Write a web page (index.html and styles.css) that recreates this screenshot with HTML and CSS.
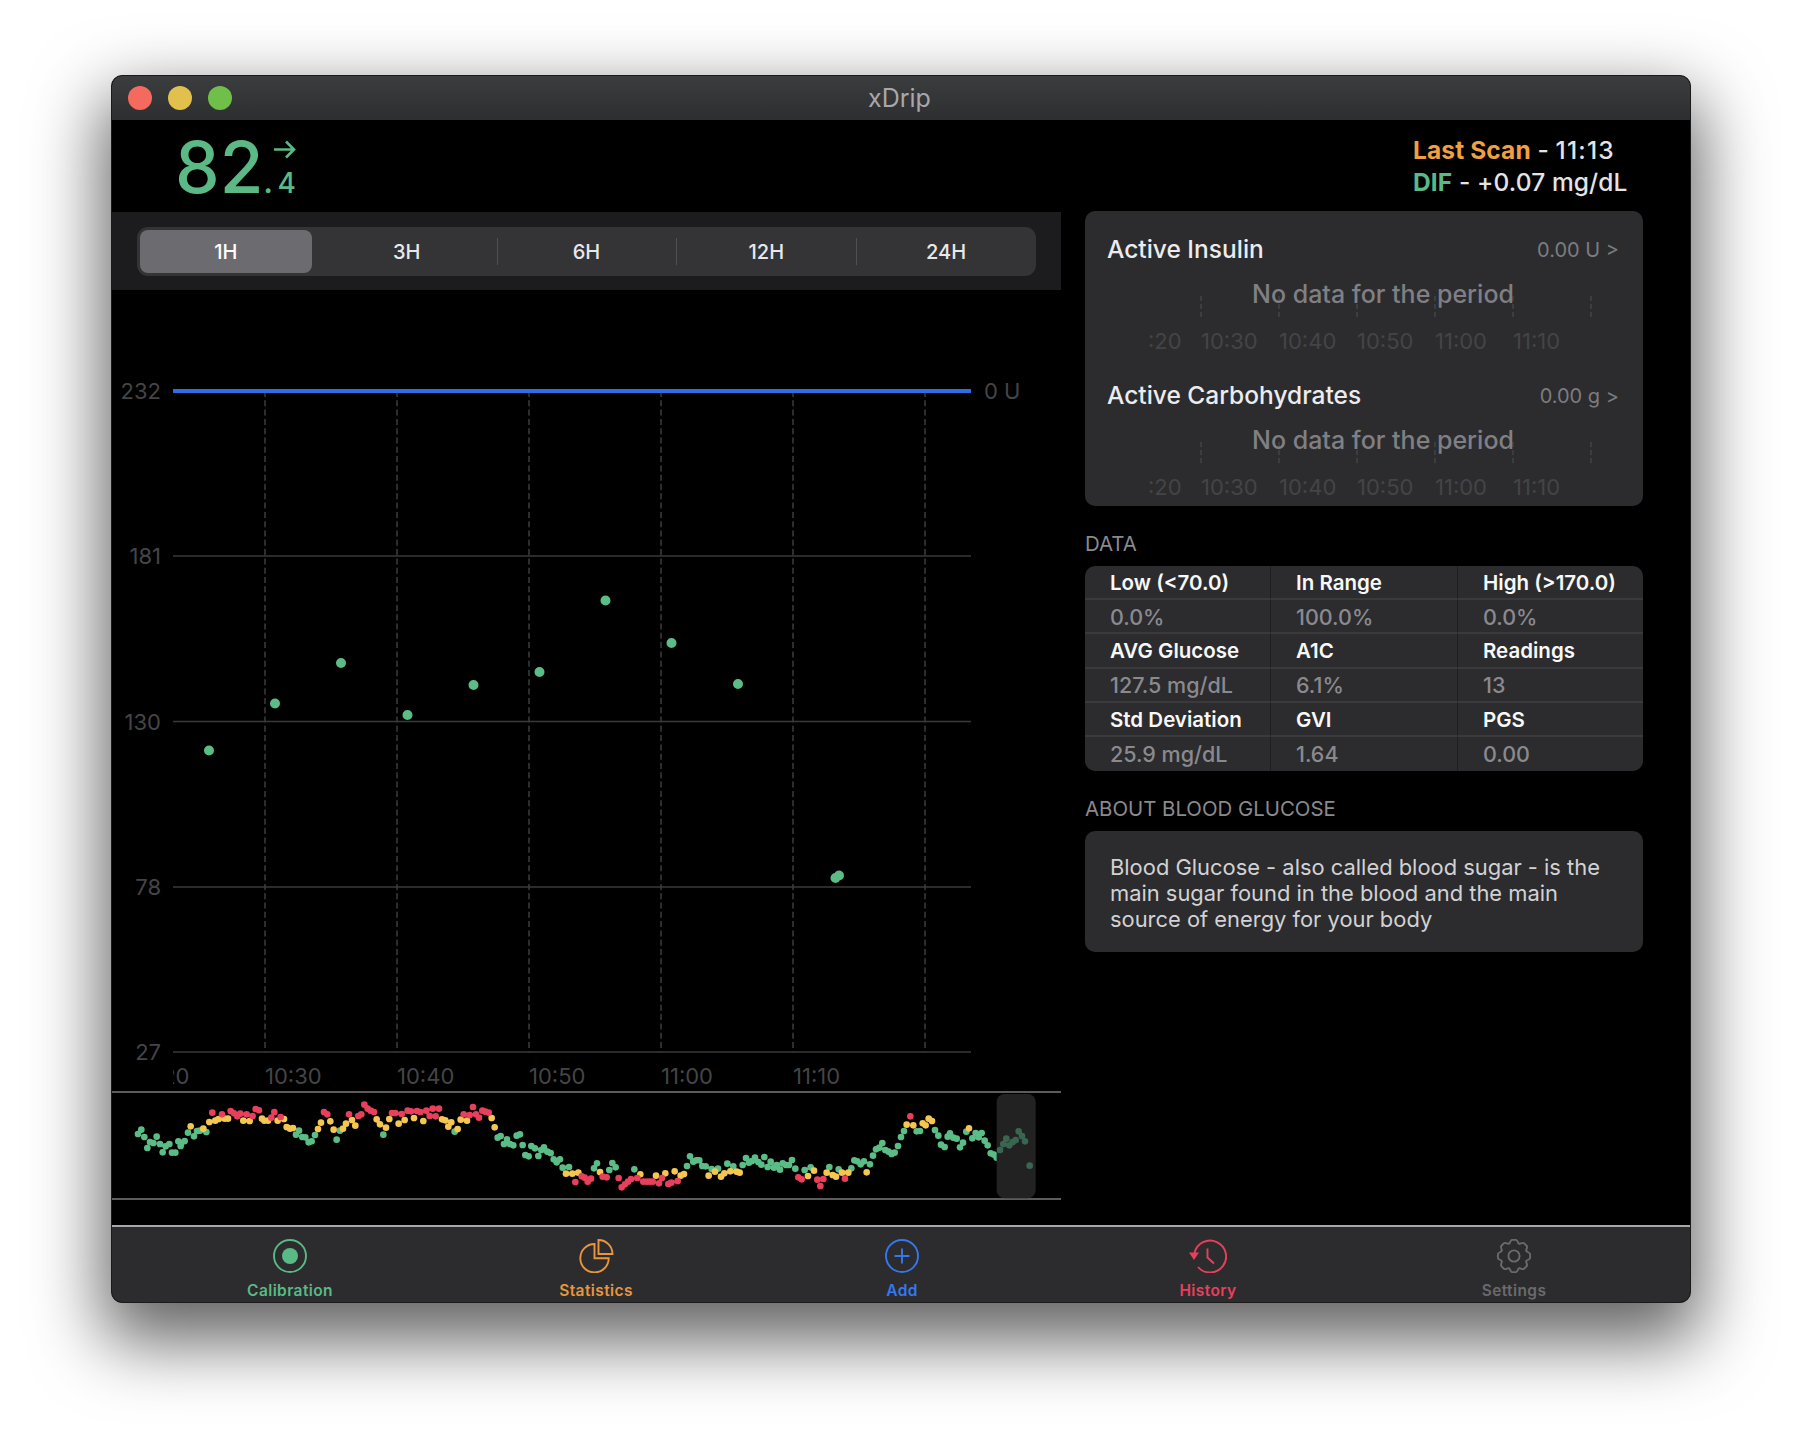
FILE: index.html
```html
<!DOCTYPE html>
<html lang="en">
<head>
<meta charset="utf-8">
<title>xDrip</title>
<link rel="stylesheet" href="styles.css">
</head>
<body>
<div class="window">
  <header class="titlebar">
    <div class="lights"><span class="light red"></span><span class="light yellow"></span><span class="light green"></span></div>
    <div class="title">xDrip</div>
  </header>
  <section class="topbar">
    <div class="reading">
      <span class="big">82</span><span class="dot">.</span>
      <div class="trend">
        <svg class="arrow" width="23" height="19" viewBox="0 0 23 19"><path d="M1 9.5H21M13 1.5L21 9.5L13 17.5"/></svg>
        <span class="small">4</span>
      </div>
    </div>
    <div class="scan">
      <div><span class="orange">Last Scan</span> - <span class="time">11:13</span></div>
      <div><span class="greentext">DIF</span> - +0.07 mg/dL</div>
    </div>
  </section>
  <div class="content">
    <div class="left">
      <div class="band">
        <div class="segments">
          <div class="seg active">1H</div>
          <div class="seg">3H</div>
          <div class="seg sep">6H</div>
          <div class="seg sep">12H</div>
          <div class="seg sep">24H</div>
        </div>
      </div>
      <svg class="chart" width="950" height="935" viewBox="112 290 950 935">
        <defs><clipPath id="plotclip"><rect x="173" y="1055" width="800" height="36"/></clipPath></defs>
        <g class="hgrid">
          <path d="M173 556H971M173 721.5H971M173 887H971M173 1052H971"/>
        </g>
        <g class="vgrid">
          <path d="M265 391V1052M397 391V1052M529 391V1052M661 391V1052M793 391V1052M925 391V1052"/>
        </g>
        <path class="blueline" d="M173 391H971"/>
        <g class="axis">
          <text x="161" y="399" text-anchor="end">232</text>
          <text x="161" y="564" text-anchor="end">181</text>
          <text x="161" y="730" text-anchor="end">130</text>
          <text x="161" y="895" text-anchor="end">78</text>
          <text x="161" y="1060" text-anchor="end">27</text>
          <text x="984" y="399">0 U</text>
          <g clip-path="url(#plotclip)">
            <text x="133" y="1084">10:20</text>
            <text x="265" y="1084">10:30</text>
            <text x="397" y="1084">10:40</text>
            <text x="529" y="1084">10:50</text>
            <text x="661" y="1084">11:00</text>
            <text x="793" y="1084">11:10</text>
          </g>
        </g>
        <path class="points" d="M209 750.5h0M275 703.5h0M341 663h0M407.5 715h0M473.5 685h0M539.5 672h0M605.5 600.5h0M671.5 643h0M738 684h0M835.5 878h0M839 875.5h0"/>
        <rect class="line-rect" x="112" y="1091" width="949" height="2"/>
        <rect class="line-rect" x="112" y="1198" width="949" height="2"/>
        <g transform="translate(110 1070) scale(.33333)">
          <path class="m g" d="M84 192h0M94 179h0M103 201h0M112 234h0M120 216h0M130 219h0M140 200h0M150 222h0M158 247h0M167 229h0M178 222h0M186 248h0M196 248h0M205 214h0M214 220h0M212 228h0M224 213h0M234 188h0M252 199h0M261 183h0M270 182h0M289 186h0M558 194h0M567 182h0M577 201h0M586 202h0M596 217h0M605 214h0M615 195h0M680 209h0M690 182h0M820 194h0M1034 185h0M1163 203h0M1172 198h0M1182 222h0M1191 208h0M1200 222h0M1210 226h0M1220 197h0M1230 193h0M1238 225h0M1246 255h0M1256 259h0M1264 228h0M1275 235h0M1285 258h0M1294 240h0M1302 232h0M1312 245h0M1322 249h0M1331 268h0M1340 277h0M1350 268h0M1358 293h0M1377 291h0"/>
          <path class="m y" d="M242 169h0M280 176h0M298 156h0M316 152h0M326 147h0M344 146h0M354 146h0M400 152h0M419 153h0M456 146h0M463 152h0M474 152h0M503 152h0M522 147h0M530 171h0M540 176h0M549 174h0M624 177h0M633 158h0M661 154h0M671 179h0M699 176h0M708 161h0M726 150h0M736 167h0M800 148h0M810 163h0M828 173h0M838 147h0M866 161h0M884 150h0M912 144h0M940 153h0M996 148h0M1006 151h0M1015 170h0M1024 157h0M1043 177h0M1052 149h0M1071 152h0M1145 144h0M1154 172h0M1368 311h0M1387 311h0M1405 308h0"/>
          <path class="m r" d="M307 128h0M336 133h0M362 123h0M372 130h0M382 139h0M391 131h0M410 133h0M428 138h0M437 117h0M447 121h0M484 143h0M493 126h0M512 141h0M642 126h0M652 133h0M717 133h0M745 138h0M754 133h0M763 104h0M773 116h0M782 122h0M792 126h0M846 129h0M856 129h0M875 132h0M893 122h0M903 124h0M921 123h0M931 126h0M949 122h0M959 138h0M968 116h0M977 139h0M987 116h0M1061 133h0M1079 135h0M1089 111h0M1098 133h0M1107 143h0M1117 122h0M1126 125h0M1136 128h0M1396 336h0M1415 319h0M1424 323h0M1433 335h0"/>
        </g>
        <g transform="translate(590 1070) scale(.33333)">
          <path class="m g" d="M12 295h0M21 280h0M58 300h0M67 279h0M77 292h0M133 298h0M291 288h0M300 259h0M310 275h0M319 271h0M328 271h0M337 288h0M347 289h0M365 297h0M384 296h0M412 281h0M430 289h0M458 285h0M468 264h0M477 278h0M495 263h0M486 273h0M505 276h0M514 284h0M523 261h0M533 291h0M542 275h0M552 293h0M560 285h0M570 299h0M578 280h0M588 285h0M597 285h0M606 270h0M616 296h0M644 300h0M662 292h0M718 291h0M746 298h0M784 295h0M793 271h0M802 274h0M812 283h0M822 274h0M840 283h0M849 257h0M858 238h0M868 233h0M877 219h0M886 240h0M896 245h0M905 252h0M914 248h0M924 228h0M933 201h0M942 183h0M980 184h0M990 183h0M1035 180h0M1045 197h0M1053 224h0M1064 231h0M1073 200h0M1080 190h0M1090 203h0M1100 206h0M1110 232h0M1119 218h0M1129 185h0M1147 205h0M1157 189h0M1166 202h0M1175 189h0M1184 212h0M1193 226h0M1202 250h0M1212 254h0M1220 263h0"/>
          <path class="m y" d="M30 306h0M151 313h0M198 317h0M226 310h0M254 304h0M272 317h0M282 312h0M356 317h0M375 305h0M393 320h0M403 310h0M421 304h0M440 305h0M449 308h0M654 318h0M672 302h0M710 308h0M728 315h0M738 320h0M756 308h0M775 308h0M830 307h0M950 164h0M970 166h0M998 160h0M1007 166h0M1016 146h0M1026 153h0M1137 175h0"/>
          <path class="m r" d="M3 326h0M38 320h0M50 322h0M86 324h0M95 352h0M105 343h0M114 335h0M123 327h0M142 324h0M160 335h0M170 335h0M179 335h0M188 335h0M207 340h0M216 324h0M235 342h0M244 338h0M263 333h0M625 322h0M635 328h0M682 329h0M691 348h0M700 327h0M765 326h0M961 139h0"/>
          <rect class="brush" x="1220" y="72" width="117" height="313" rx="24"/>
          <path class="m d" d="M1230 240h0M1240 222h0M1249 206h0M1258 226h0M1268 216h0M1277 210h0M1286 184h0M1296 198h0M1305 214h0M1319 287h0"/>
        </g>
      </svg>
    </div>
    <aside class="right">
      <div class="card active-card">
        <div class="block">
          <div class="block-head"><span class="block-title">Active Insulin</span><span class="block-val">0.00 U &gt;</span></div>
          <svg class="mini" width="557" height="90" viewBox="0 0 557 90">
            <path class="mini-v" d="M116 23V44M194 23V44M272 23V44M350 23V44M428 23V44M506 23V44"/>
            <text class="nodata" x="167" y="30">No data for the period</text>
            <g class="mini-t"><text x="63" y="76">:20</text><text x="116" y="76">10:30</text><text x="194" y="76">10:40</text><text x="272" y="76">10:50</text><text x="350" y="76">11:00</text><text x="428" y="76">11:10</text></g>
          </svg>
        </div>
        <div class="block">
          <div class="block-head"><span class="block-title">Active Carbohydrates</span><span class="block-val">0.00 g &gt;</span></div>
          <svg class="mini" width="557" height="90" viewBox="0 0 557 90">
            <path class="mini-v" d="M116 23V44M194 23V44M272 23V44M350 23V44M428 23V44M506 23V44"/>
            <text class="nodata" x="167" y="30">No data for the period</text>
            <g class="mini-t"><text x="63" y="76">:20</text><text x="116" y="76">10:30</text><text x="194" y="76">10:40</text><text x="272" y="76">10:50</text><text x="350" y="76">11:00</text><text x="428" y="76">11:10</text></g>
          </svg>
        </div>
      </div>
      <h2 class="sec sec-data">DATA</h2>
      <div class="card table">
        <div class="c h">Low (&lt;70.0)</div><div class="c h">In Range</div><div class="c h">High (&gt;170.0)</div>
        <div class="c v">0.0%</div><div class="c v">100.0%</div><div class="c v">0.0%</div>
        <div class="c h">AVG Glucose</div><div class="c h">A1C</div><div class="c h">Readings</div>
        <div class="c v">127.5 mg/dL</div><div class="c v">6.1%</div><div class="c v">13</div>
        <div class="c h">Std Deviation</div><div class="c h">GVI</div><div class="c h">PGS</div>
        <div class="c v">25.9 mg/dL</div><div class="c v">1.64</div><div class="c v">0.00</div>
      </div>
      <h2 class="sec sec-about">ABOUT BLOOD GLUCOSE</h2>
      <div class="card about">Blood Glucose - also called blood sugar - is the main sugar found in the blood and the main source of energy for your body</div>
    </aside>
  </div>
  <nav class="tabs">
    <div class="tab t-green">
      <svg width="38" height="34" viewBox="0 0 38 34"><circle cx="19" cy="17" r="16"/><circle class="fill" cx="19" cy="17" r="8"/></svg>
      <span>Calibration</span>
    </div>
    <div class="tab t-orange">
      <svg width="38" height="34" viewBox="0 0 38 34"><path d="M17.5 5A14.2 14.2 0 1 0 31.7 19.2H17.5Z"/><path d="M21.5 1V15H35.5A14 14 0 0 0 21.5 1Z"/></svg>
      <span>Statistics</span>
    </div>
    <div class="tab t-blue">
      <svg width="38" height="34" viewBox="0 0 38 34"><circle cx="19" cy="17" r="16"/><path d="M19 9.5V24.5M11.5 17H26.5"/></svg>
      <span>Add</span>
    </div>
    <div class="tab t-red">
      <svg width="38" height="34" viewBox="0 0 38 34"><path d="M5.5 14A16 16 0 1 1 9 28"/><path class="fill" d="M0 13.5H10L5 21Z"/><path d="M18.5 9.5V18.5L25 24.5"/></svg>
      <span>History</span>
    </div>
    <div class="tab t-gray">
      <svg width="38" height="34" viewBox="0 0 38 34">
        <defs><path id="tooth" d="M14.03 4.99C15 4 15.5 .9 17 .9H21C22.5 .9 23 4 23.97 4.99"/></defs>
        <g>
          <use href="#tooth"/><use href="#tooth" transform="rotate(45 19 17)"/><use href="#tooth" transform="rotate(90 19 17)"/><use href="#tooth" transform="rotate(135 19 17)"/><use href="#tooth" transform="rotate(180 19 17)"/><use href="#tooth" transform="rotate(225 19 17)"/><use href="#tooth" transform="rotate(270 19 17)"/><use href="#tooth" transform="rotate(315 19 17)"/>
        </g>
        <circle cx="19" cy="17" r="5.6"/>
      </svg>
      <span>Settings</span>
    </div>
  </nav>
</div>
</body>
</html>
```
FILE: styles.css
```css
* { box-sizing: border-box; }
html, body { margin: 0; height: 100%; }
body {
  width: 1802px;
  height: 1450px;
  background: #fff;
  padding: 75px 111px 0;
  font-family: Inter, "Liberation Sans", sans-serif;
  overflow: hidden;
}
.window {
  width: 1580px;
  height: 1228px;
  background: #000;
  border-radius: 11px;
  border: 1px solid #1a1a1a;
  overflow: hidden;
  display: flex;
  flex-direction: column;
  box-shadow: 0 30px 70px 8px rgba(0,0,0,.62);
}
.titlebar {
  height: 44px;
  flex: none;
  position: relative;
  background: linear-gradient(#3c3d3f, #2d2e30);
  display: flex;
  align-items: center;
  justify-content: center;
}
.lights { position: absolute; left: 16px; top: 10px; display: flex; gap: 16px; }
.light { width: 24px; height: 24px; border-radius: 50%; }
.light.red { background: #f46a5e; }
.light.yellow { background: #e2c04d; }
.light.green { background: #6fbf49; }
.title { font-size: 25px; color: #a8a8aa; margin-left: -3px; }
.topbar {
  height: 92px;
  flex: none;
  display: flex;
  justify-content: space-between;
  color: #5ab984;
}
.reading { display: flex; align-items: flex-start; padding: 4px 0 0 63px; }
.big { font-size: 71px; line-height: 86px; font-weight: 500; }
.dot { font-size: 28px; line-height: 28px; margin: 45px 0 0 0; font-weight: 700; }
.trend { display: flex; flex-direction: column; padding-top: 16px; }
.arrow { fill: none; stroke: #5ab984; stroke-width: 2.6; }
.small { font-size: 28px; line-height: 32px; margin-top: 8px; text-align: right; font-weight: 500; }
.scan { color: #e4e4e6; font-size: 24.5px; line-height: 32px; padding: 14px 0 0; width: 277px; font-weight: 500; letter-spacing: .12px; }
.time { letter-spacing: 1.2px; }
.orange { color: #f0a040; font-weight: 700; }
.greentext { color: #5ab984; font-weight: 700; }
.content { flex: 1; display: flex; min-height: 0; }
.left { width: 949px; flex: none; display: flex; flex-direction: column; }
.band { height: 78px; flex: none; background: #1c1c1e; padding: 15px 25px; }
.segments {
  height: 49px;
  background: #343437;
  border-radius: 11px;
  display: grid;
  grid-template-columns: repeat(5, 1fr);
  width: 899px;
}
.seg {
  font-size: 20px;
  font-weight: 500;
  color: #e8e8ea;
  display: flex;
  align-items: center;
  justify-content: center;
  position: relative;
}
.seg.active { background: #6c6c70; border-radius: 8px; color: #fff; margin: 3px 5px 3px 3px; }
.seg.sep::before {
  content: "";
  position: absolute;
  left: 0;
  top: 11px;
  bottom: 11px;
  width: 1px;
  background: #505053;
}
.chart { display: block; flex: none; }
.hgrid path { stroke: #3a3a3c; stroke-width: 1.6; fill: none; }
.vgrid path { stroke: #3c3c3e; stroke-width: 1.5; stroke-dasharray: 6 3.3; fill: none; }
.blueline { stroke: #2d6ee6; stroke-width: 4; fill: none; }
.axis text { font-size: 22px; fill: #454547; }
.points { stroke: #5bbd86; stroke-width: 10; stroke-linecap: round; fill: none; }
.line-rect { fill: #5c5c5e; }
.m { fill: none; stroke-width: 20; stroke-linecap: round; }
.m.g { stroke: #5bbd86; }
.m.y { stroke: #f6c750; }
.m.r { stroke: #e8405c; }
.m.d { stroke: #3a6551; }
.brush { fill: #222223; }
.right { width: 558px; margin-left: 24px; flex: none; margin-top: -1px; }
.card { background: #2c2c2e; border-radius: 10px; }
.active-card { height: 295px; padding-top: 22px; overflow: hidden; }
.block { height: 146px; }
.block-head {
  height: 32px;
  display: flex;
  justify-content: space-between;
  align-items: center;
  padding: 0 24px 0 22px;
}
.block-title { font-size: 24.5px; font-weight: 500; color: #ececee; }
.block-val { font-size: 20px; color: #7c7c80; padding-top: 2px; }
.mini { display: block; margin-top: 8px; }
.mini-v { stroke: #434345; stroke-width: 1.5; stroke-dasharray: 5 3; fill: none; }
.nodata { font-size: 25px; font-weight: 500; fill: #808084; }
.mini-t text { font-size: 22px; fill: #444446; }
.sec { margin: 0; font-size: 20.4px; font-weight: 400; color: #8a8a8e; line-height: 24px; }
.sec-data { padding-top: 26px; height: 60px; }
.table {
  height: 205px;
  display: grid;
  grid-template-columns: 186px 187px 185px;
  grid-auto-rows: 1fr;
  overflow: hidden;
}
.c {
  padding: 1px 0 0 25px;
  display: flex;
  align-items: center;
  font-size: 20.5px;
  font-weight: 500;
  border-right: 1px solid #1f1f21;
  border-bottom: 2px solid #3a3a3c;
}
.c:nth-child(3n) { border-right: 0; }
.c:nth-last-child(-n+3) { border-bottom: 0; }
.c.h { color: #f8f8f8; font-weight: 600; }
.c.v { color: #8a8a8e; font-size: 21.5px; }
.sec-about { padding-top: 26px; height: 60px; }
.about {
  height: 121px;
  padding: 23px 25px;
  font-size: 21.9px;
  line-height: 26px;
  color: #d2d2d4;
}
.tabs {
  flex: none;
  height: 77px;
  background: #2c2c2e;
  border-top: 2px solid #a8a8a8;
  padding: 12px 24px 0 25px;
  display: grid;
  grid-template-columns: repeat(5, 306px);
}
.tab {
  display: flex;
  flex-direction: column;
  align-items: center;
  font-size: 15.5px;
  font-weight: 600;
  letter-spacing: .4px;
}
.tab svg { fill: none; stroke: currentColor; stroke-width: 1.9; display: block; }
.tab svg .fill { fill: currentColor; stroke: none; }
.tab span { margin-top: 8px; line-height: 20px; }
.t-green { color: #5ab984; }
.t-orange { color: #e8953c; }
.t-blue { color: #3478f0; }
.t-red { color: #e8405c; }
.t-gray { color: #6a6a6c; }
```
